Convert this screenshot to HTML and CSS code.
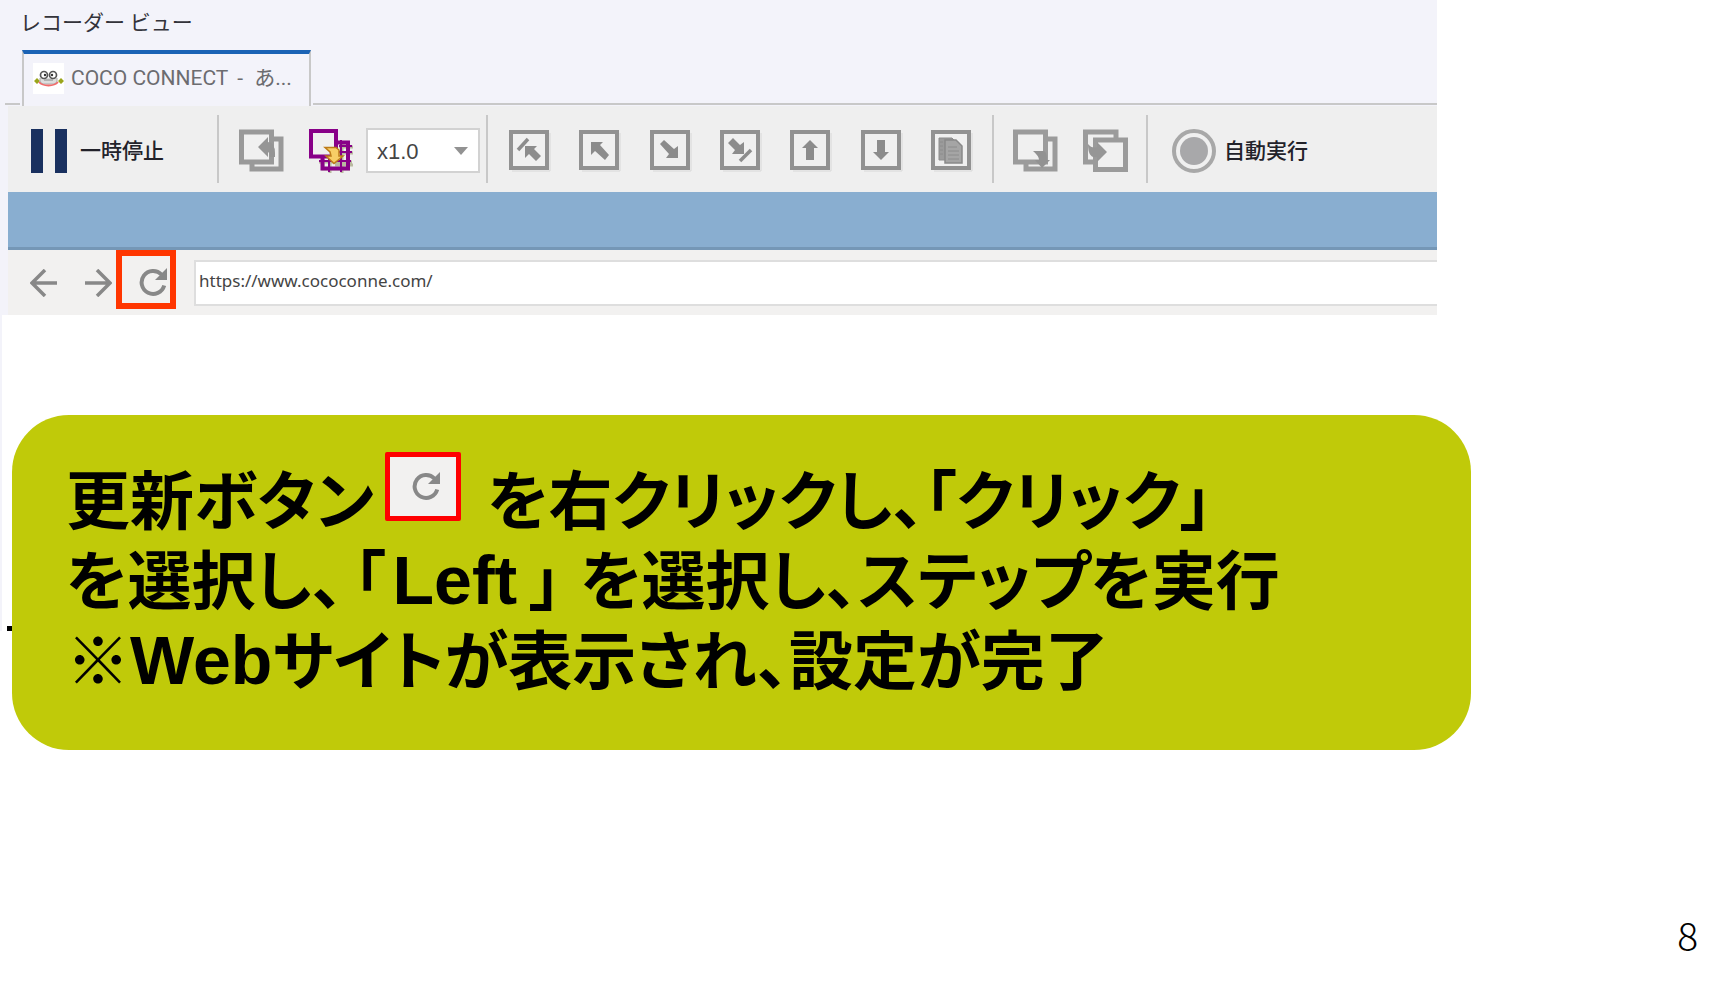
FILE: index.html
```html
<!DOCTYPE html>
<html lang="ja">
<head>
<meta charset="utf-8">
<meta name="viewport" content="width=device-width, initial-scale=1">
<title>レコーダー ビュー</title>
<link rel="stylesheet" href="styles.css">
</head>
<body>
<svg class="defs" aria-hidden="true">
  <symbol id="reload" viewBox="0 0 28 28">
    <path d="M22.500 6.500A11.500 11.500 0 1 0 25.200 17.500" fill="none" stroke="#888" stroke-width="4"/>
    <path d="M28 0V12H16Z" fill="#888"/>
  </symbol>
  <symbol id="frame" viewBox="0 0 42 42">
    <path d="M41 3V41H3" fill="none" stroke="#d8d8d8" stroke-width="1"/>
    <rect x="2" y="2" width="36" height="36" fill="#f0f0f0" stroke="#929292" stroke-width="4"/>
  </symbol>
</svg>
<main class="slide">
  <section class="recorder">
    <h1 class="title">レコーダー ビュー</h1>
    <div class="tabs">
      <button class="tab" type="button">
        <svg class="favicon" viewBox="0 0 31 31" aria-hidden="true">
          <rect width="31" height="31" fill="#fff"/>
          <path d="M1 18l3-3 3 3-3 3zM25 18l3-3 3 3-3 3z" fill="#9aa51b"/>
          <path d="M7 15Q6 22 13 21H18Q25 22 24 15" fill="#ddd" stroke="#aaa"/>
          <circle cx="11" cy="12" r="3.500" fill="#fff" stroke="#555" stroke-width="1.700"/>
          <circle cx="20" cy="12" r="3.500" fill="#fff" stroke="#555" stroke-width="1.700"/>
          <circle cx="12" cy="12" r="1.200" fill="#333"/><circle cx="19" cy="12" r="1.200" fill="#333"/>
          <path d="M11 17H20" stroke="#888"/>
          <path d="M6 19Q9 22.500 15.500 22.500T25 19" fill="none" stroke="#f26a6a" stroke-width="1.800"/>
        </svg>
        <span>COCO CONNECT <span class="tab-dash">-</span> あ...</span>
      </button>
    </div>
    <div class="toolbar">
      <div class="group group-pause">
        <button class="tool" type="button">
          <svg width="36" height="44" viewBox="0 0 36 44" aria-hidden="true"><path d="M0 0H12V44H0ZM24 0H36V44H24Z" fill="#19305f"/></svg>
          <span class="label pause-label">一時停止</span>
        </button>
      </div>
      <div class="group group-record">
        <button class="tool" type="button" aria-label="戻る">
          <svg width="46" height="44" viewBox="0 0 46 44" aria-hidden="true">
            <path d="M34 10H42V40H13V34" fill="none" stroke="#999" stroke-width="5"/>
            <path d="M2.500 3H32.500V33H2.500Z" fill="#f0f0f0" stroke="#999" stroke-width="5"/>
            <path d="M19 18L29 8V13Q36 14 36 24V28H31Q31 24 29 23V28Z" fill="#959595"/>
          </svg>
        </button>
        <button class="tool" type="button" aria-label="ステップ記録">
          <svg width="46" height="44" viewBox="0 0 46 44" aria-hidden="true">
            <path d="M30 14H39.500V40H14V30M10 33H43M30 18H44M30 24H44M21 28V44M33 12V44M26 36H44" fill="none" stroke="#b9b9a0" stroke-width="3"/>
            <path d="M29 13.500H39V39.500H13.500V29" fill="none" stroke="#880088" stroke-width="4"/>
            <path d="M10 32H42M30 17H43M30 23H43M20 28V43M32 11V43" fill="none" stroke="#880088" stroke-width="2"/>
            <path d="M2 2H27V27.500H2Z" fill="#f0f0f0" stroke="#880088" stroke-width="4"/>
            <path d="M16 18.500H27L30 21V27H34L25 34.500L17 27H22L21 23Z" fill="#f7ce66" stroke="#bd7b18" stroke-width="1.500"/>
          </svg>
        </button>
        <span class="speed">
          <select class="speed-select" aria-label="再生速度"><option>x1.0</option></select>
          <svg class="speed-arrow" width="14" height="8" viewBox="0 0 14 8" aria-hidden="true"><path d="M0 0H14L7 8Z" fill="#929292"/></svg>
        </span>
      </div>
      <div class="group group-steps">
        <button class="tool" type="button" aria-label="最初のステップ"><svg width="42" height="42" aria-hidden="true"><use href="#frame"/><path d="M9 20L19 9" stroke="#8c8c8c" stroke-width="3.500"/><path d="M16 16H28L25 19L32 26L27 31L20 24L16 28Z" fill="#8c8c8c"/></svg></button>
        <button class="tool" type="button" aria-label="前のステップ"><svg width="42" height="42" aria-hidden="true"><use href="#frame"/><path d="M12 12H24L21 15L30 25L26 30L16 21L12 25Z" fill="#8c8c8c"/></svg></button>
        <button class="tool" type="button" aria-label="次のステップ"><svg width="42" height="42" aria-hidden="true"><use href="#frame"/><path d="M10 14L14 10L24 19L28 16V28H16L19 24Z" fill="#8c8c8c"/></svg></button>
        <button class="tool" type="button" aria-label="最後のステップ"><svg width="42" height="42" aria-hidden="true"><use href="#frame"/><path d="M8 13L13 8L20 15L24 12V24H12L15 20Z" fill="#8c8c8c"/><path d="M20 31L31 20" stroke="#8c8c8c" stroke-width="3.500"/></svg></button>
        <button class="tool" type="button" aria-label="上へ"><svg width="42" height="42" aria-hidden="true"><use href="#frame"/><path d="M20 10L28 18H24V30H16V18H12Z" fill="#8c8c8c"/></svg></button>
        <button class="tool" type="button" aria-label="下へ"><svg width="42" height="42" aria-hidden="true"><use href="#frame"/><path d="M16 10H24V22H28L20 30L12 22H16Z" fill="#8c8c8c"/></svg></button>
        <button class="tool" type="button" aria-label="コピー"><svg width="42" height="42" aria-hidden="true"><use href="#frame"/><path d="M8 8H21L25 12V30H8Z" fill="#9b9b9b" stroke="#8c8c8c"/><path d="M14 10H25L31 16V33H14Z" fill="#a5a5a5" stroke="#898989" stroke-width="1.500"/><path d="M17 17H26M17 21H28M17 25H28M17 29H28M9 12H12M9 16H12M9 20H12M9 24H12" stroke="#8c8c8c"/></svg></button>
      </div>
      <div class="group group-windows">
        <button class="tool" type="button" aria-label="ステップイン">
          <svg width="46" height="44" viewBox="0 0 46 44" aria-hidden="true">
            <path d="M34 10H42V40H13V34" fill="none" stroke="#9b9b9b" stroke-width="5"/>
            <path d="M2.500 3H32.500V33H2.500Z" fill="#f0f0f0" stroke="#9b9b9b" stroke-width="5"/>
            <path d="M20 22H31Q34 23 34 31H37L29 39L22 31H26Q26 27 20 22Z" fill="#929292"/>
          </svg>
        </button>
        <button class="tool" type="button" aria-label="ステップアウト">
          <svg width="46" height="44" viewBox="0 0 46 44" aria-hidden="true">
            <path d="M33 10V3H2.500V33H12" fill="none" stroke="#9b9b9b" stroke-width="5"/>
            <path d="M12.500 11H42.500V40.500H12.500Z" fill="#f0f0f0" stroke="#9b9b9b" stroke-width="5"/>
            <path d="M5 15Q9 20 14 18V13L24 23L14 33V28Q5 30 5 15Z" fill="#969696"/>
          </svg>
        </button>
      </div>
      <div class="group group-auto">
        <button class="tool" type="button">
          <svg width="44" height="44" viewBox="0 0 44 44" aria-hidden="true"><circle cx="22" cy="22" r="20" fill="#f0f0f0" stroke="#a8a8a8" stroke-width="4"/><circle cx="22" cy="22" r="14" fill="#a8a8aa"/></svg>
          <span class="label">自動実行</span>
        </button>
      </div>
    </div>
    <div class="band"></div>
    <div class="nav">
      <button class="nav-button" type="button" aria-label="戻る"><svg width="28" height="28" viewBox="0 0 28 28" aria-hidden="true"><path d="M27 14H2M15 1L2 14L15 27" fill="none" stroke="#888" stroke-width="3.500"/></svg></button>
      <button class="nav-button nav-forward" type="button" aria-label="進む"><svg width="28" height="28" viewBox="0 0 28 28" aria-hidden="true"><path d="M1 14H26M13 1L26 14L13 27" fill="none" stroke="#888" stroke-width="3.500"/></svg></button>
      <button class="nav-button nav-reload" type="button" aria-label="更新"><svg width="28" height="28" aria-hidden="true"><use href="#reload"/></svg></button>
      <input class="address" type="text" aria-label="アドレス" value="https://www.cococonne.com/">
    </div>
  </section>
  <div class="edge"></div>
  <section class="callout">
    <p class="line">更新ボタン<span class="key"><svg width="28" height="28" role="img" aria-label="更新"><use href="#reload"/></svg></span>を右クリックし、「クリック」</p>
    <p class="line">を選択し、<span class="quoted">「<span class="latin">Left</span>」</span>を選択し、ステップを実行</p>
    <p class="line">※<span class="latin">Web</span>サイトが表示され、設定が完了</p>
  </section>
  <footer class="page-number">8</footer>
</main>
</body>
</html>
```
FILE: styles.css
```css
* { box-sizing: border-box; }

body {
  margin: 0;
  background: #fff;
  color: #000;
  font-family: "Liberation Sans", "Noto Sans CJK JP", sans-serif;
}

button {
  border: 0;
  padding: 0;
  background: none;
  color: inherit;
  font: inherit;
}

svg { display: block; flex: none; }

.defs { position: absolute; width: 0; height: 0; }

.slide {
  position: relative;
  display: flex;
  flex-direction: column;
  min-height: 100vh;
}

.recorder {
  width: 83.45%;
  background: #f3f3fa;
}

.title {
  margin: 0;
  padding: 5px 20px 13px;
  font: 400 21px/32px "Noto Sans CJK JP", sans-serif;
  color: #33333a;
}

.tabs {
  display: flex;
  height: 56px;
  padding-left: 5px;
}

.tabs::before,
.tabs::after {
  content: "";
  width: 15px;
  margin-bottom: 1px;
  border-bottom: 2px solid #c8c8c8;
}

.tabs::after { flex: 1; }

.tab {
  display: flex;
  align-items: center;
  gap: 7px;
  width: 289px;
  margin: 0 2px;
  padding: 0 9px 4px;
  border: 2px solid #c8c8c8;
  border-top: 4px solid #1b63b5;
  border-bottom: 0;
  color: #6c6c70;
  font: 400 21px/28px Roboto, "Noto Sans CJK JP", sans-serif;
  white-space: nowrap;
}

.tab-dash { margin: 0 6px 0 4px; }

.favicon { width: 31px; height: 31px; }

.toolbar {
  display: flex;
  align-items: center;
  height: 86px;
  margin-left: 8px;
  background: #efefef;
}

.group {
  display: flex;
  align-items: center;
  flex: none;
  height: 68px;
  padding-top: 3px;
  border-left: 2px solid #c8c8c8;
}

.group-pause { width: 209px; padding-left: 23px; border-left: 0; }
.group-record { width: 269px; padding-left: 20px; gap: 24px; }
.group-steps { width: 506px; padding-left: 21px; padding-right: 19px; justify-content: space-between; }
.group-windows { width: 154px; padding-left: 19px; gap: 24px; }
.group-auto { padding-left: 24px; }

.tool {
  display: flex;
  align-items: center;
  gap: 8px;
  color: #22222a;
  font: 500 21px/28px "Noto Sans CJK JP", sans-serif;
}

.label { padding-bottom: 3px; }

.pause-label { margin-left: 5px; }

.speed {
  position: relative;
  margin-left: -13px;
}

.speed-select {
  display: block;
  width: 114px;
  height: 45px;
  padding: 2px 9px 0;
  border: 2px solid #d2d2d2;
  border-radius: 0;
  background: #fff;
  color: #444;
  font: 400 22px/28px "Liberation Sans", sans-serif;
  appearance: none;
}

.speed-arrow {
  position: absolute;
  top: 19px;
  right: 12px;
}

.band {
  height: 58px;
  margin-left: 8px;
  background: #89aed0;
  border-bottom: 3px solid #7597b6;
}

.nav {
  display: flex;
  align-items: center;
  height: 65px;
  margin-left: 8px;
  padding-left: 22px;
  background: #f2f1f0;
}

.nav-forward { margin: 0 4px 0 26px; }

.nav-reload {
  align-self: flex-start;
  width: 60px;
  height: 59px;
  padding: 4px 0 0 17px;
  border: 6px solid #ff3600;
}

.address {
  flex: 1;
  min-width: 0;
  height: 46px;
  margin-left: 18px;
  padding: 0 3px 5px;
  border: 2px solid #dedede;
  border-right: 0;
  background: #fff;
  color: #444;
  font: 400 17px/28px "Noto Sans", sans-serif;
}

.edge {
  position: absolute;
  top: 315px;
  left: 0;
  width: 2px;
  height: 316px;
  background: #f3f3fa;
}

.edge::after {
  content: "";
  position: absolute;
  bottom: 0;
  left: 7px;
  width: 8px;
  height: 5px;
  background: #000;
}

.callout {
  position: relative;
  width: 84.73%;
  margin: 100px 0 0 12px;
  padding: 47px 54px 48px;
  border-radius: 57px;
  background: #c0ca09;
}

.line {
  margin: 0;
  height: 80px;
  font: 700 64px/80px "Liberation Sans", "Noto Sans CJK JP", sans-serif;
  font-feature-settings: "palt";
  white-space: nowrap;
}

.latin { font-size: 68px; line-height: 1; }

.quoted { margin: 0 19px 0 10px; }
.quoted .latin { margin: 0 12px 0 7px; }

.key {
  display: inline-flex;
  align-items: center;
  justify-content: center;
  width: 76px;
  height: 69px;
  margin: -30px 26px 0 11px;
  padding-left: 5px;
  border: 5px solid #f00;
  border-radius: 2px;
  background: #f2f1f0;
  vertical-align: 24px;
}

.page-number {
  margin: auto 24px 24px auto;
  font: 300 39px/56px "Noto Sans CJK JP", sans-serif;
}
```
